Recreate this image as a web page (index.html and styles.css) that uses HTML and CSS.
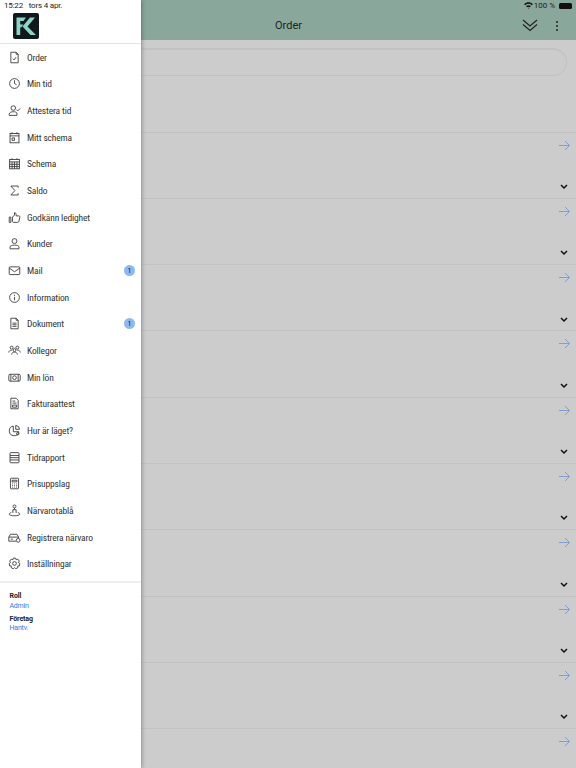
FILE: index.html
```html
<!DOCTYPE html>
<html lang="sv">
<head>
    <meta charset="UTF-8">
    <meta name="viewport" content="width=device-width, initial-scale=1.0">
    <title>Order</title>
    <link rel="stylesheet" href="styles.css">
</head>
<body>
    <div class="app">
        <!-- Side menu -->
        <aside class="drawer">
            <div class="status-left">15:22 <span>tors 4 apr.</span></div>
            <div class="drawer-logo">
                <svg width="26" height="26" viewBox="0 0 26 26">
                    <rect width="26" height="26" rx="2" fill="#10191b"/>
                    <path d="M3.5 22V4.5H13L10.5 8H7.2V11.5H10.5L8 14.5H7.2V22Z" fill="#8fd4c6"/>
                    <path d="M22 4.5H17L9.5 13.5L17.5 22H23L14.5 13.5Z" fill="#8fd4c6"/>
                </svg>
            </div>
            <nav class="menu">
                <a class="menu-item"><svg class="icon" viewBox="0 0 16 16"><path d="M3.5 1.5H10L12.5 4V14.5H3.5ZM10 1.5V4H12.5M6 9.5L7.5 11L10 7.5"/></svg>Order</a>
                <a class="menu-item"><svg class="icon" viewBox="0 0 16 16"><circle cx="8" cy="8" r="6"/><path d="M8 4V8L10.5 9.5"/></svg>Min tid</a>
                <a class="menu-item"><svg class="icon" viewBox="0 0 16 16"><circle cx="6.5" cy="5" r="2.8"/><path d="M1.5 14V12.5C1.5 10.500 4 9.500 6.500 9.500S10 10 11 11V14ZM10.500 7L12 8.500L15 5.500"/></svg>Attestera tid</a>
                <a class="menu-item"><svg class="icon" viewBox="0 0 16 16"><rect x="2.500" y="3" width="11" height="11.500"/><path d="M2.500 6H13.500M5 1.500V4M11 1.500V4M5 8.500H8V11.500H5Z"/></svg>Mitt schema</a>
                <a class="menu-item"><svg class="icon" viewBox="0 0 16 16"><rect x="2" y="3" width="12" height="11.500"/><path d="M2 6H14M5 1.500V3M11 1.500V3M2 9H14M2 11.800H14M5 6V14.500M8 6V14.500M11 6V14.500"/></svg>Schema</a>
                <a class="menu-item"><svg class="icon" viewBox="0 0 16 16"><path d="M12.500 4.500V2.500H3.500L8.500 8L3.500 13.500H12.500V11.500"/></svg>Saldo</a>
                <a class="menu-item"><svg class="icon" viewBox="0 0 16 16"><path d="M1.500 7.500H3.500V14H1.500ZM5.500 7.500L8 5V2C9.500 2 10 3 10 4.500V6H13.500C14.500 6 14.700 7 14.500 8L13.500 12.500C13.300 13.500 12.500 14 11.500 14H7C6 14 5.500 13.500 5.500 13Z"/></svg>Godkänn ledighet</a>
                <a class="menu-item"><svg class="icon" viewBox="0 0 16 16"><circle cx="8" cy="5" r="3"/><path d="M2.500 14.500V12.500C2.500 10.500 5 10 8 10S13.500 10.500 13.500 12.500V14.500Z"/></svg>Kunder</a>
                <a class="menu-item"><svg class="icon" viewBox="0 0 16 16"><rect x="1.500" y="3.500" width="13" height="9.500" rx="1"/><path d="M1.500 5L8 9.500L14.500 5"/></svg>Mail<span class="badge">1</span></a>
                <a class="menu-item"><svg class="icon" viewBox="0 0 16 16"><circle cx="8" cy="8" r="6"/><path d="M8 7.200V11.500M8 4.500V6"/></svg>Information</a>
                <a class="menu-item"><svg class="icon" viewBox="0 0 16 16"><path d="M3.500 1.500H10L12.500 4V14.500H3.500ZM10 1.500V4H12.500M5.500 7.500H10.500M5.500 9.500H10.500M5.500 11.500H10.500"/></svg>Dokument<span class="badge">1</span></a>
                <a class="menu-item"><svg class="icon" viewBox="0 0 16 16"><circle cx="4.500" cy="4.500" r="1.800"/><circle cx="11.500" cy="4.500" r="1.800"/><circle cx="8" cy="7.500" r="1.800"/><path d="M1 10.500C1 8.500 2.500 7.500 4.500 7.800M15 10.500C15 8.500 13.500 7.500 11.500 7.800M4.500 13C4.500 11 6 10 8 10S11.500 11 11.500 13"/></svg>Kollegor</a>
                <a class="menu-item"><svg class="icon" viewBox="0 0 16 16"><rect x="1" y="4" width="14" height="8.500" rx="1.500"/><circle cx="8" cy="8.200" r="2.300"/><path d="M3.500 4V12.500M12.500 4V12.500"/></svg>Min lön</a>
                <a class="menu-item"><svg class="icon" viewBox="0 0 16 16"><path d="M3.500 1.500H10L12.500 4V14.500H3.500ZM5.500 5H9M5.500 7.500H10.500M5.500 10H10.500V12.500H5.500Z"/></svg>Fakturaattest</a>
                <a class="menu-item"><svg class="icon" viewBox="0 0 16 16"><path d="M13.500 9.500A6 6 0 1 1 6.500 2.500V9.500Z"/><path d="M9.500 1.800A5 5 0 0 1 14.200 6.500H9.500Z"/><circle cx="12" cy="12" r="1.500"/></svg>Hur är läget?</a>
                <a class="menu-item"><svg class="icon" viewBox="0 0 16 16"><rect x="2.500" y="2" width="11" height="12.500" rx="1"/><path d="M2.500 5.500H13.500M2.500 8.200H13.500M2.500 11H13.500"/></svg>Tidrapport</a>
                <a class="menu-item"><svg class="icon" viewBox="0 0 16 16"><rect x="3" y="1.500" width="10" height="13" rx="1"/><path d="M5 4H11V6H5ZM5 8.500H6M7.500 8.500H8.500M10 8.500H11M5 10.500H6M7.500 10.500H8.500M10 10.500H11M5 12.500H6M7.500 12.500H8.500M10 12.500H11"/></svg>Prisuppslag</a>
                <a class="menu-item"><svg class="icon" viewBox="0 0 16 16"><circle cx="8" cy="3" r="1.800"/><path d="M8 5V6.500M6 11V7H10V11M4 10.500C2.500 11 1.500 11.700 1.500 12.500C1.500 13.700 4.500 14.500 8 14.500S14.500 13.700 14.500 12.500C14.500 11.700 13.500 11 12 10.500"/></svg>Närvarotablå</a>
                <a class="menu-item"><svg class="icon" viewBox="0 0 16 16"><path d="M1 12.500V7.500L3 4H11L13 7.500M1 7.500H13V9M1 12.500H10"/><circle cx="12.500" cy="11.500" r="2.300"/><path d="M3.500 10H6"/></svg>Registrera närvaro</a>
                <a class="menu-item"><svg class="icon" viewBox="0 0 16 16"><path d="M6.500 1.500H9.500L10 3.500L12 2.600L14 5L12.700 6.700L14.500 8L14 11L12 11L12 13.200L9.500 14.500L8 13L6.500 14.500L4 13.200L4 11L2 11L1.500 8L3.300 6.700L2 5L4 2.600L6 3.500Z"/><circle cx="8" cy="8" r="2.300"/></svg>Inställningar</a>
            </nav>
            <div class="drawer-footer">
                <div class="foot-label">Roll</div>
                <div class="foot-value">Admin</div>
                <div class="foot-label second">Företag</div>
                <div class="foot-value">Hantv.</div>
            </div>
        </aside>

        <!-- Order list, dimmed behind the menu -->
        <main class="content">
            <header class="topbar">
                <div class="status-right">
                    <svg class="wifi" width="9" height="7" viewBox="0 0 10 8"><path d="M0 2.500C3 -0.500 7 -0.500 10 2.500L8.800 3.700C6.500 1.500 3.500 1.500 1.200 3.700ZM2.200 4.700C3.800 3.200 6.200 3.200 7.800 4.700L6.600 5.900C5.600 5.100 4.400 5.100 3.400 5.900ZM4.300 6.800C4.700 6.500 5.300 6.500 5.700 6.800L5 7.600Z" fill="#111"/></svg>
                    <span>100 %</span>
                    <span class="battery"></span>
                </div>
                <div class="topbar-row">
                    <h1>Order</h1>
                    <svg class="collapse-icon" width="16" height="13" viewBox="0 0 16 13"><path d="M1 1L8 7L15 1M1 5.500L8 11.500L15 5.500"/></svg>
                    <span class="kebab"><i></i><i></i><i></i></span>
                </div>
            </header>
            <div class="search-row"><div class="search"></div></div>
            <section class="rows" id="rows"></section>
        </main>
    </div>
    <script src="rows.js"></script>
</body>
</html>
```

FILE: styles.css
```css
* {
    box-sizing: border-box;
    margin: 0;
    padding: 0;
}

body {
    font-family: Roboto, "Liberation Sans", sans-serif;
    background: #cccccc;
    overflow: hidden;
}

.app {
    display: flex;
    width: 576px;
    height: 768px;
    overflow: hidden;
}

.drawer {
    width: 141px;
    flex-shrink: 0;
    height: 768px;
    background: white;
    box-shadow: 1px 0 4px rgba(0,0,0,0.3);
    position: relative;
    z-index: 2;
}

.status-left {
    height: 11px;
    padding: 1px 0 0 4px;
    font-size: 8px;
    line-height: 10px;
    color: #222;
    white-space: nowrap;
    letter-spacing: -0.2px;
}

.status-left span {
    margin-left: 4px;
}

.drawer-logo {
    height: 33px;
    padding: 2px 0 0 13px;
    border-bottom: 1px solid #e4e4e4;
}

.menu-item {
    display: flex;
    align-items: center;
    height: 26.67px;
    padding-left: 8px;
    padding-right: 6px;
    font-size: 9.5px;
    font-stretch: 75%;
    letter-spacing: -0.15px;
    color: #333;
}

.icon {
    width: 13px;
    height: 13px;
    margin-right: 6px;
    fill: none;
    stroke: #3c3c3c;
    stroke-width: 1.1;
    flex-shrink: 0;
}

.badge {
    width: 11px;
    height: 11px;
    margin-left: auto;
    border-radius: 50%;
    background: #8fb9ee;
    font-size: 8px;
    line-height: 11px;
    text-align: center;
    color: #222;
}

.drawer-footer {
    margin-top: 4px;
    padding: 8px 0 0 9.5px;
    border-top: 2px solid #eeeeee;
    font-size: 7px;
    line-height: 10px;
    letter-spacing: -0.1px;
}

.foot-label {
    font-weight: bold;
    color: #222;
}

.foot-label.second {
    margin-top: 3px;
}

.foot-value {
    color: #2a80e6;
    margin-top: -0.5px;
    letter-spacing: -0.2px;
}

.content {
    flex: 1;
    min-width: 0;
}

.topbar {
    height: 40px;
    background: #8aa79c;
}

.status-right {
    display: flex;
    justify-content: flex-end;
    align-items: center;
    gap: 3px;
    height: 11px;
    padding-right: 4px;
    font-size: 8px;
    color: #222;
}

.wifi {
    margin-right: -2px;
}

.battery {
    width: 13px;
    height: 6px;
    margin-left: 1px;
    border-radius: 1.5px;
    background: #111;
}

.topbar-row {
    display: flex;
    align-items: center;
    height: 29px;
    position: relative;
    justify-content: flex-end;
    padding-right: 18px;
}

.topbar-row h1 {
    position: absolute;
    left: 134px;
    top: 8px;
    font-size: 11px;
    line-height: 14px;
    font-weight: 400;
    color: #222;
}

.collapse-icon {
    margin-right: 18px;
    fill: none;
    stroke: #222;
    stroke-width: 1.2;
}

.kebab {
    display: flex;
    flex-direction: column;
    gap: 2px;
}

.kebab i {
    width: 2px;
    height: 2px;
    background: #222;
    border-radius: 50%;
}

.search-row {
    height: 36px;
    padding: 8px 9px 0 0;
}

.search {
    height: 28px;
    border: 1px solid #c2c2c2;
    border-top-width: 2px;
    border-left: none;
    border-radius: 0 14px 14px 0;
}

.rows {
    margin-top: 55.5px;
}

.row {
    height: 66.3px;
    border-top: 1.5px solid #c2c2c2;
    position: relative;
}

.row-arrow {
    position: absolute;
    right: 6px;
    top: 7px;
    fill: none;
    stroke: #7f9fd0;
    stroke-width: 1;
}

.row-chevron {
    position: absolute;
    right: 8px;
    top: 51.5px;
    fill: none;
    stroke: #111;
    stroke-width: 1.5;
}
```

FILE: rows.js
```js
// Build the order rows
const rows = document.getElementById('rows');
for (let i = 0; i < 10; i++) {
    const row = document.createElement('div');
    row.className = 'row';
    row.innerHTML = `
        <svg class="row-arrow" width="11" height="11" viewBox="0 0 11 11"><path d="M0 5.500H10M6 1L10.500 5.500L6 10"/></svg>
        <svg class="row-chevron" width="8" height="6" viewBox="0 0 8 6"><path d="M1 1L4 4L7 1"/></svg>`;
    rows.appendChild(row);
}
```
